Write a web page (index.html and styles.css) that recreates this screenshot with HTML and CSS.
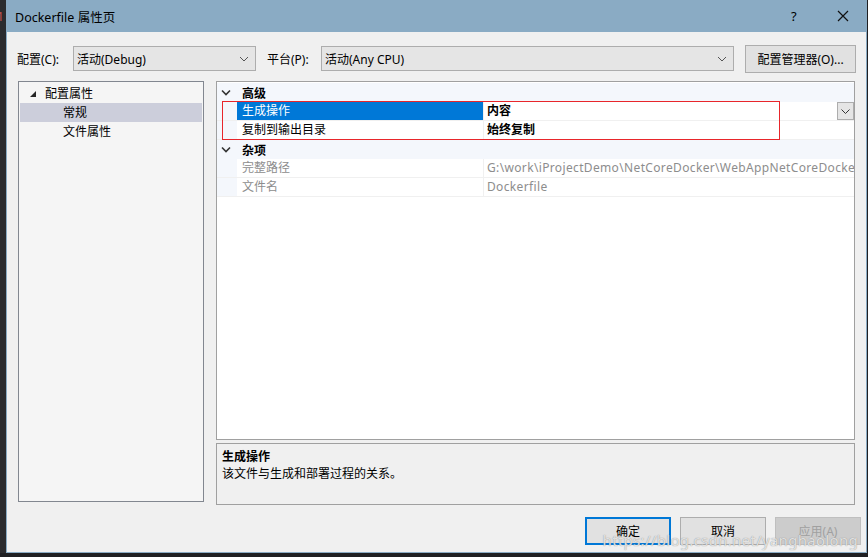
FILE: index.html
```html
<!DOCTYPE html>
<html lang="zh-CN">
<head>
    <meta charset="UTF-8">
    <title>Dockerfile 属性页</title>
    <link rel="stylesheet" href="styles.css">
</head>
<body>
    <div class="screen">
        <div class="side"><span>1</span></div>
        <div class="win">
            <div class="titlebar">
                <span class="title">Dockerfile 属性页</span>
                <span class="help">?</span>
                <svg class="close" width="12" height="12" viewBox="0 0 12 12"><path d="M1 1 L11 11 M11 1 L1 11" stroke="#111" stroke-width="1.2" fill="none"/></svg>
            </div>
            <div class="toprow">
                <span class="lbl">配置(C):</span>
                <div class="select sel1">活动(Debug)<svg class="chev" width="10" height="6" viewBox="0 0 10 6"><path d="M1 1 L5 5 L9 1" stroke="#555" fill="none"/></svg></div>
                <span class="lbl lbl2">平台(P):</span>
                <div class="select sel2">活动(Any CPU)<svg class="chev" width="10" height="6" viewBox="0 0 10 6"><path d="M1 1 L5 5 L9 1" stroke="#555" fill="none"/></svg></div>
                <div class="btn mgr">配置管理器(O)...</div>
            </div>
            <div class="main">
                <div class="tree">
                    <div class="node"><span class="tri"></span>配置属性</div>
                    <div class="node sub active">常规</div>
                    <div class="node sub">文件属性</div>
                </div>
                <div class="rightcol">
                    <div class="grid">
                        <div class="cat"><svg class="cchev" width="10" height="7" viewBox="0 0 10 7"><path d="M1 1.5 L5 5.5 L9 1.5" stroke="#333" stroke-width="1.6" fill="none"/></svg><span>高级</span></div>
                        <div class="prow">
                            <span class="gut"></span>
                            <span class="pname sel">生成操作</span>
                            <span class="pval b">内容</span>
                            <span class="ddbtn"><svg width="9" height="5" viewBox="0 0 9 5"><path d="M0.5 0.5 L4.5 4.5 L8.5 0.5" stroke="#333" fill="none"/></svg></span>
                        </div>
                        <div class="prow">
                            <span class="gut"></span>
                            <span class="pname">复制到输出目录</span>
                            <span class="pval b">始终复制</span>
                        </div>
                        <div class="cat"><svg class="cchev" width="10" height="7" viewBox="0 0 10 7"><path d="M1 1.5 L5 5.5 L9 1.5" stroke="#333" stroke-width="1.6" fill="none"/></svg><span>杂项</span></div>
                        <div class="prow ro">
                            <span class="gut"></span>
                            <span class="pname">完整路径</span>
                            <span class="pval path">G:\work\iProjectDemo\NetCoreDocker\WebAppNetCoreDocker\Dockerfile</span>
                        </div>
                        <div class="prow ro">
                            <span class="gut"></span>
                            <span class="pname">文件名</span>
                            <span class="pval path">Dockerfile</span>
                        </div>
                        <div class="mark"></div>
                    </div>
                    <div class="desc">
                        <div class="dtitle">生成操作</div>
                        <div class="dtext">该文件与生成和部署过程的关系。</div>
                    </div>
                </div>
            </div>
            <div class="bottom">
                <div class="btn ok">确定</div>
                <div class="btn">取消</div>
                <div class="btn dis">应用(A)</div>
                <span class="wm">https://blog.csdn.net/yanghaolong</span>
            </div>
        </div>
    </div>
</body>
</html>
```

FILE: styles.css
```css
* {
    box-sizing: border-box;
    margin: 0;
    padding: 0;
}
body {
    background-color: #1f1f22;
    font-family: "Noto Sans", "Noto Sans CJK SC", sans-serif;
    font-size: 12px;
    color: #000;
}
.screen {
    display: flex;
    width: 868px;
    height: 553px;
}
.side {
    width: 6px;
    background-color: #2b2b2e;
    color: #c75450;
    font-size: 12px;
    overflow: hidden;
    padding-top: 8px;
}
.side span {
    margin-left: -3px;
}
.win {
    position: relative;
    width: 861px;
    height: 553px;
    background-color: #f0f0f0;
    border-left: 1px solid #8aabc4;
    border-right: 1px solid #8aabc4;
    border-bottom: 1px solid #8aabc4;
    display: flex;
    flex-direction: column;
}
.titlebar {
    height: 32px;
    background-color: #8aabc4;
    display: flex;
    align-items: center;
    padding-left: 8px;
    font-size: 12.5px;
}
.title {
    flex: 1;
}
.help {
    width: 14px;
    margin-right: 32px;
    font-size: 13px;
}
.close {
    margin-right: 17px;
}
.toprow {
    display: flex;
    align-items: center;
    margin-top: 13px;
    height: 27px;
    padding-left: 10px;
}
.lbl {
    width: 56px;
}
.lbl2 {
    width: 54px;
    margin-left: 11px;
}
.select {
    height: 25px;
    border: 1px solid #adadad;
    background-color: #e5e5e5;
    display: flex;
    align-items: center;
    justify-content: space-between;
    padding: 0 6px 0 3px;
}
.sel1 {
    width: 183px;
}
.sel2 {
    width: 413px;
}
.btn {
    height: 28px;
    border: 1px solid #adadad;
    background-color: #e1e1e1;
    display: flex;
    align-items: center;
    justify-content: center;
    width: 86px;
}
.mgr {
    width: 111px;
    margin-left: 11px;
}
.main {
    display: flex;
    margin-top: 9px;
    padding-left: 11px;
    gap: 12px;
}
.tree {
    width: 186px;
    height: 421px;
    background-color: #f5f5f5;
    border: 1px solid #828790;
    padding: 2px 1px;
}
.node {
    height: 19px;
    line-height: 19px;
    padding-left: 25px;
    position: relative;
}
.node.sub {
    padding-left: 43px;
}
.node.active {
    background-color: #cccedb;
}
.tri {
    position: absolute;
    left: 10px;
    top: 7px;
    width: 0;
    height: 0;
    border-left: 6px solid transparent;
    border-bottom: 6px solid #262626;
}
.rightcol {
    width: 639px;
    display: flex;
    flex-direction: column;
    gap: 3px;
}
.grid {
    position: relative;
    height: 359px;
    background-color: #fff;
    border: 1px solid #a0a0a0;
    padding-top: 1px;
}
.cat {
    height: 19px;
    background-color: #f4f7fc;
    display: flex;
    align-items: center;
    font-weight: bold;
}
.cchev {
    margin-left: 4px;
    margin-right: 11px;
}
.prow {
    height: 19px;
    display: flex;
    border-bottom: 1px solid #f0f0f0;
}
.gut {
    width: 20px;
    background-color: #f4f7fc;
}
.pname {
    width: 247px;
    padding-left: 5px;
    line-height: 18px;
    border-right: 1px solid #f0f0f0;
}
.pname.sel {
    background-color: #0078d7;
    color: #fff;
}
.pval {
    flex: 1;
    padding-left: 3px;
    line-height: 18px;
    white-space: nowrap;
    overflow: hidden;
}
.path {
    letter-spacing: 0.35px;
}
.b {
    font-weight: bold;
}
.ro .pname, .ro .pval {
    color: #8d8d8d;
}
.ddbtn {
    width: 17px;
    height: 18px;
    border: 1px solid #adadad;
    background-color: #e5e5e5;
    display: flex;
    align-items: center;
    justify-content: center;
}
.mark {
    position: absolute;
    left: 5px;
    top: 19px;
    width: 558px;
    height: 39px;
    border: 1px solid #e8262b;
}
.desc {
    height: 62px;
    border: 1px solid #a0a0a0;
    background-color: #f0f0f0;
    padding: 4px 5px;
}
.dtitle {
    font-weight: bold;
    line-height: 17px;
}
.dtext {
    line-height: 18px;
}
.bottom {
    position: relative;
    display: flex;
    justify-content: flex-end;
    gap: 9px;
    margin-top: 12px;
    padding-right: 5px;
}
.btn.ok {
    border: 2px solid #0078d7;
}
.btn.dis {
    background-color: #cccccc;
    border-color: #bfbfbf;
    color: #a0a0a0;
}
.wm {
    position: absolute;
    right: 8px;
    top: 13px;
    font-size: 15px;
    color: rgba(255, 255, 255, 0.75);
    text-shadow: 0 0 1px #777;
    letter-spacing: 0.3px;
}
```
